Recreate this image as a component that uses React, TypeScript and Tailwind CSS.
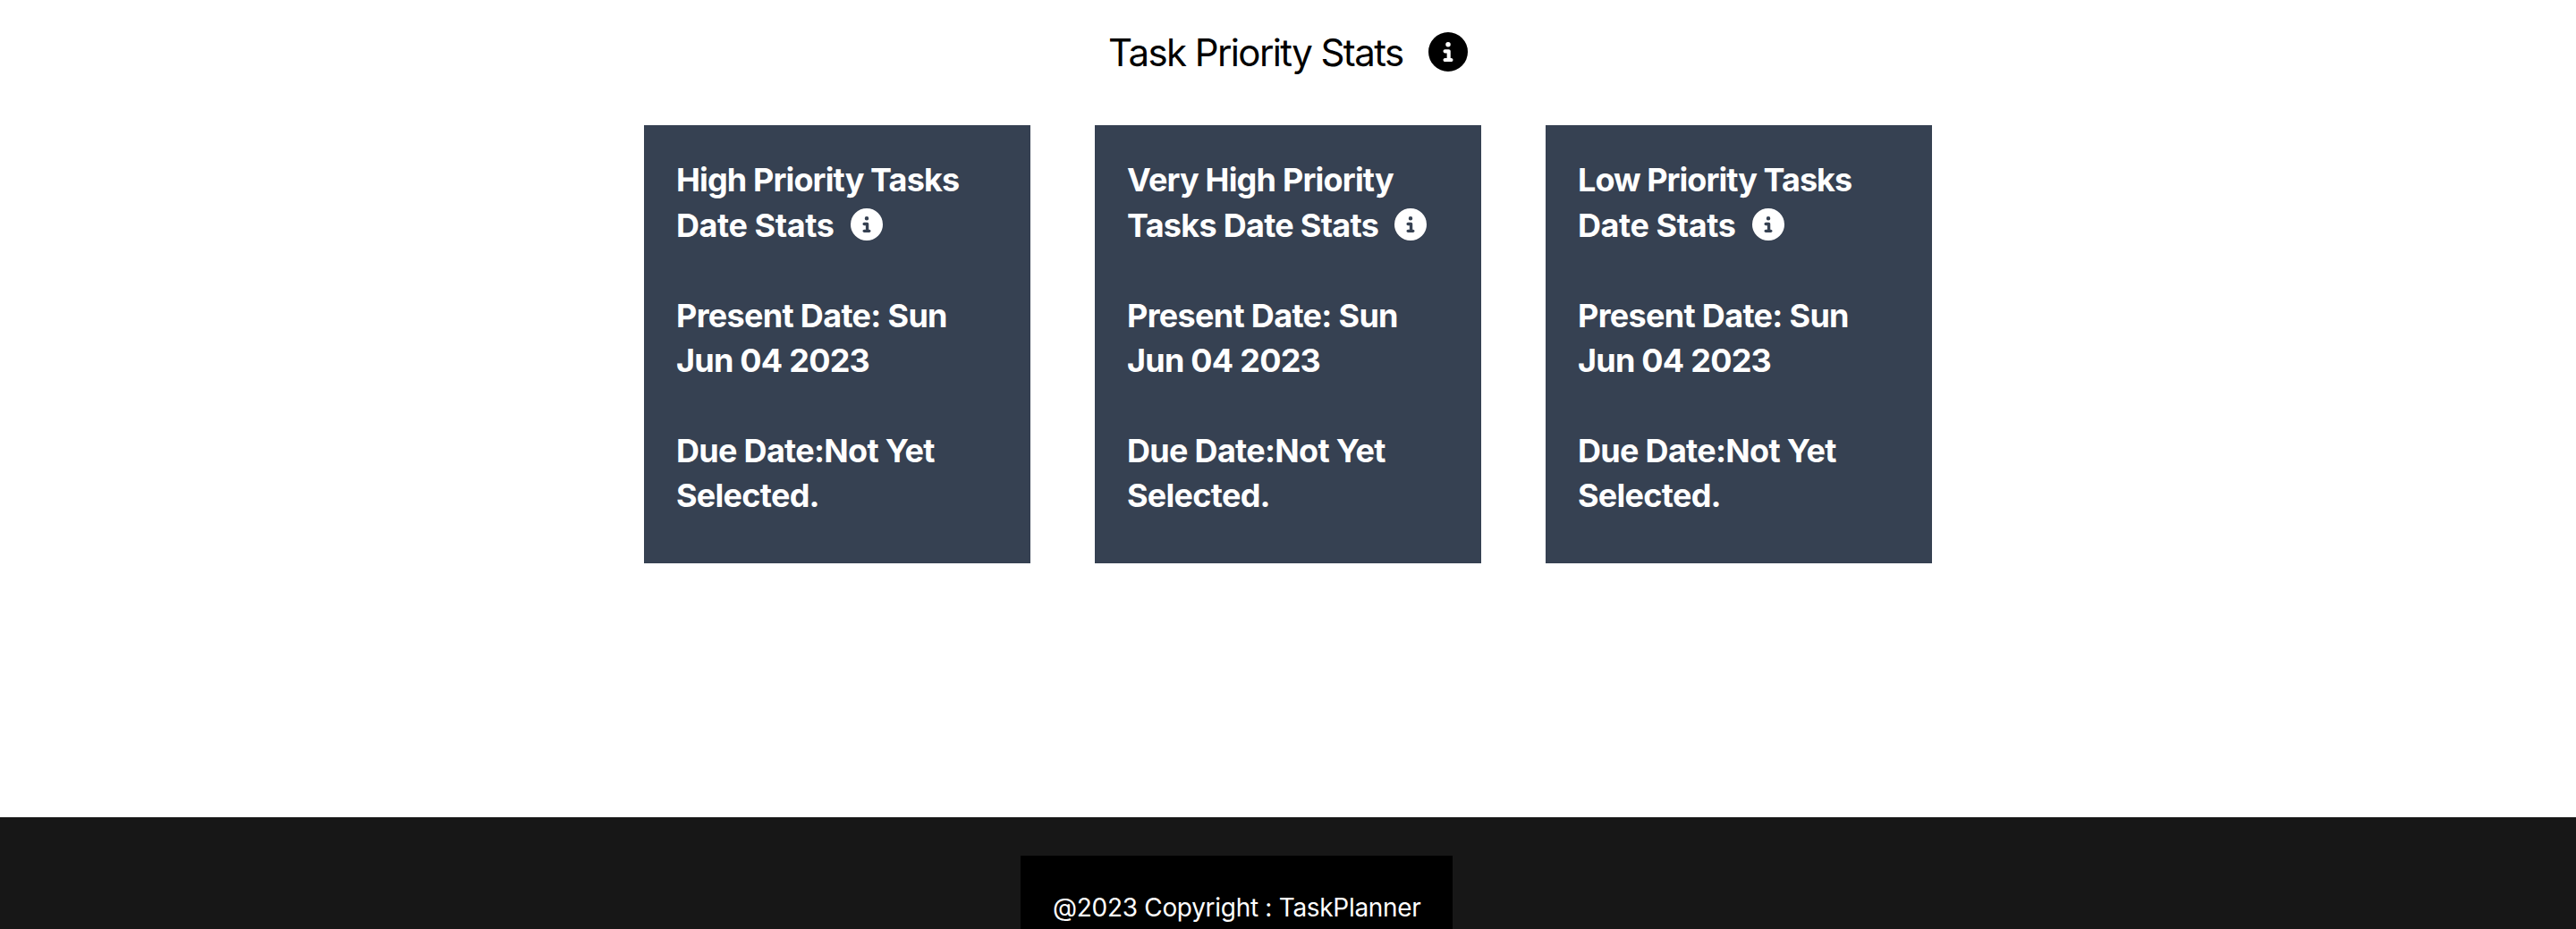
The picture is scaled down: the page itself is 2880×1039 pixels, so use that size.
import { FaCircleInfo } from "react-icons/fa6";

type Line = { text: string; spacing: string };

type Card = { heading: [Line, Line]; iconGap: string };

const cards: Card[] = [
  {
    heading: [
      { text: "High Priority Tasks", spacing: "tracking-[-0.87px]" },
      { text: "Date Stats", spacing: "tracking-[-0.42px]" },
    ],
    iconGap: "left-[195px]",
  },
  {
    heading: [
      { text: "Very High Priority", spacing: "tracking-[-0.8px]" },
      { text: "Tasks Date Stats", spacing: "tracking-[-0.72px]" },
    ],
    iconGap: "left-[299px]",
  },
  {
    heading: [
      { text: "Low Priority Tasks", spacing: "tracking-[-0.96px]" },
      { text: "Date Stats", spacing: "tracking-[-0.42px]" },
    ],
    iconGap: "left-[195px]",
  },
];

const details: [Line, Line][] = [
  [
    { text: "Present Date: Sun", spacing: "tracking-[-0.68px]" },
    { text: "Jun 04 2023", spacing: "tracking-[-0.76px]" },
  ],
  [
    { text: "Due Date:Not Yet", spacing: "tracking-[-0.7px]" },
    { text: "Selected.", spacing: "tracking-[-0.72px]" },
  ],
];

function TextLine({ text, spacing }: Line) {
  return <span className={`block whitespace-nowrap ${spacing}`}>{text}</span>;
}

function StatCard({ heading, iconGap }: Card) {
  return (
    <article className="flex h-[490px] w-[432px] flex-col gap-[50.4px] bg-[#364152] px-9 pt-[36.4px] text-[36px] leading-[50.4px] font-bold text-white">
      <h2 className="relative">
        {heading.map((line) => (
          <TextLine key={line.text} {...line} />
        ))}
        <FaCircleInfo className={`absolute top-[56.6px] size-9 ${iconGap}`} />
      </h2>
      {details.map((lines) => (
        <p key={lines[0].text}>
          {lines.map((line) => (
            <TextLine key={line.text} {...line} />
          ))}
        </p>
      ))}
    </article>
  );
}

export default function App() {
  return (
    <div className="flex h-[1039px] flex-col overflow-hidden bg-white font-['Inter',sans-serif]">
      <main className="flex h-[914px] flex-col items-center">
        <header className="flex h-[140px] w-[402px] items-start justify-between pt-9 text-black">
          <h1 className="mt-[-7px] text-[42px] leading-[60px] tracking-[-1.6px] whitespace-nowrap">
            Task Priority Stats
          </h1>
          <FaCircleInfo className="size-[44px]" />
        </header>
        <section className="flex gap-[72px]">
          {cards.map((card) => (
            <StatCard key={card.heading[0].text} {...card} />
          ))}
        </section>
      </main>
      <footer className="flex h-[125px] bg-[#171717] pt-[43px] pl-[1141px]">
        <div className="h-[82px] w-[483px] bg-black pt-9 pl-9 text-[28px] leading-[44px] tracking-[-0.3px] whitespace-nowrap text-white">
          @2023 Copyright : TaskPlanner
        </div>
      </footer>
    </div>
  );
}
